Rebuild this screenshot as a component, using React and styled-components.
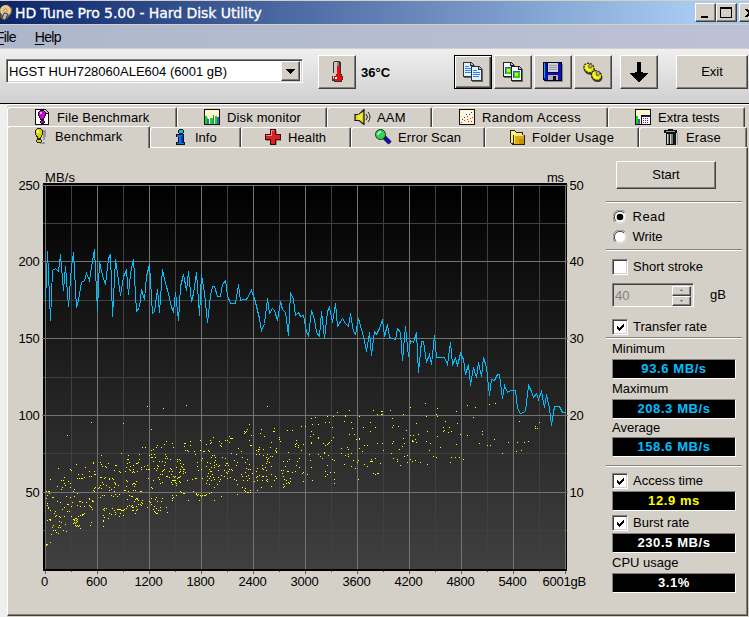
import React from "react";
import styled, { createGlobalStyle, css } from "styled-components";

// Chart samples, stored in thirds of a pixel relative to each block's origin
const rateBlocks = [
  {
    x: 0,
    y: 160,
    points:
      "136,420 142,273 151,482 157,330 166,325 175,333 181,283 190,390 196,319 206,440 214,320 220,277 229,443 236,420 245,366 253,362 259,340 268,360 276,300 283,268 286,330 292,452 299,305 307,345 316,373 324,295 331,283 337,470 346,298 353,340 362,407 371,350 379,330 385,403 392,340 400,298 409,455 418,443 425,388 433,418 439,350 448,312 457,461 464,455 472,388 479,458 487,328 496,370 505,400 514,443 520,455 526,397 535,482 542,380 550,343 559,390 565,335",
  },
  {
    x: 190,
    y: 230,
    points:
      "4,214 10,190 19,127 28,257 34,132 43,190 52,277 60,195 67,170 72,170 82,199 91,199 97,162 106,151 112,195 121,220 136,220 145,163 152,211 160,208 169,208 184,181 193,205 208,265 214,301 223,280 232,205 238,250 247,235 254,242 262,271 271,213 277,237 286,247 295,316 301,187 310,207 316,256 325,247 332,259 340,256 348,303 355,320 364,241 373,267 380,307 388,320 394,244 403,325 412,245 418,232 427,277 436,220 442,289 457,265 465,280 475,289 481,250 490,303 496,314 505,265 514,299 521,320 529,364 538,307 544,376 552,305 559,313 568,295",
  },
  {
    x: 380,
    y: 280,
    points:
      "7,118 13,170 22,133 29,172 46,178 53,145 60,156 67,242 76,139 85,230 91,181 100,187 109,157 115,278 124,184 131,184 139,247 148,223 154,253 163,166 169,232 192,232 202,253 211,187 217,253 226,236 233,256 242,220 250,237 257,283 265,253 271,317 280,262 289,292 295,247 304,289 310,233 320,262 328,346 334,298 343,300 352,283 358,283 367,355 374,317 382,337 391,331 406,331 413,385 422,401 436,394 445,317 453,335 460,352 468,341 475,358 484,335 493,382 499,344 508,385 514,436 523,380 538,380 547,397 556,397",
  },
];

const accessBlocks = [
  {
    x: 0,
    y: 400,
    points:
      "442,19 490,25 559,16 802,19 274,67 370,70 202,106 454,88 175,205 151,238 229,193 280,187 304,166 364,160 385,166 427,142 436,142 418,163 211,208 214,211 256,202 268,214 283,214 280,190 301,187 304,193 307,199 316,199 319,202 325,190 346,196 349,196 358,214 361,217 343,211 283,223 286,223 268,229 274,229 247,223 235,223 232,235 238,235 244,235 247,235 253,232 193,232 190,241 184,241 205,244 211,250 211,262 187,262 184,268 172,259 193,250 196,256 223,268 220,274 139,274 145,274 148,274 148,280 142,286 139,295 157,292 160,292 172,304 181,307 142,310 142,316 145,322 145,325 166,334 163,340 169,346 166,349 151,331 151,358 148,358 151,361 142,361 178,349 181,352 178,364 178,376 181,382 175,382 160,376 157,382 160,391 166,391 169,397 154,403 175,400 190,391 199,394 139,433 142,433 139,436 151,427 202,313 205,313 199,289 211,292 217,307 214,319 193,322 187,328 202,334 208,334 214,349 193,349 196,373 184,367 220,358 223,358 226,355 229,355 232,358 229,361 223,361 220,370 223,367 226,370 229,367 229,379 232,376 238,376 235,379 241,385 232,364 226,376 232,280 223,289 241,304 238,304 247,307 232,316 241,319 253,319 259,307 268,316 271,319 274,322 277,328 277,304 268,298 268,295 277,301 280,304 247,343 250,343 253,340 247,346 235,349 241,346 274,367 271,376 310,346 313,352 310,361 310,364 310,379 310,328 313,325 313,331 319,325 325,355 328,340 334,343 337,325 343,331 346,337 346,343 352,328 355,328 358,328 361,328 364,331 367,331 370,331 373,328 358,349 370,346 361,340 382,319 379,325 388,316 394,319 397,316 397,322 400,322 400,331 397,331 409,331 406,340 412,328 409,319 403,304 406,298 409,295 412,295 415,313 421,313 424,307 427,301 427,310 415,301 424,316 412,298 382,298 388,286 394,289 397,289 385,274 421,274 424,274 442,322 448,304 454,295 466,298 469,292 451,307 454,313 463,319 460,328 463,334 469,340 472,340 475,331 481,331 481,322 469,325 466,337 499,322 502,337 472,304 484,304 487,295 517,286 520,292 517,295 517,301 529,286 541,274 544,277 550,280 553,280 565,301 580,274 589,280 589,283 595,283 592,286 601,286 604,289 607,286 613,286 616,286 619,283 598,301 628,280 634,277 643,301 664,289 712,283 732,271 735,274 742,277 745,277 751,277 751,271 772,271 784,262 814,259 850,262 853,259 850,253 859,250 868,250 871,235 295,265 298,262 301,256 310,253 307,247 319,256 301,232 304,232 313,235 316,232 328,235 328,238 337,235 340,238 343,247 346,250 346,253 355,256 343,262 328,262 328,271 334,268 334,286 340,289 346,283 352,289 358,283 343,274 313,286 307,286 304,265 301,292 286,262 280,271 283,265 283,274 373,271 376,271 379,259 382,244 379,241 397,253 400,250 403,250 406,253 403,259 400,271 406,271 409,244 376,214 379,202 382,190 385,178 388,187 391,199 388,208 391,211 397,217 400,214 400,208 403,217 400,196 409,190 412,190 415,187 418,178 412,214 424,202 424,208 382,178 433,199 439,208 445,208 442,196 448,208 445,235 454,262 457,265 460,241 469,211 463,205 472,205 475,199 472,196 478,184 460,184 457,172 454,172 448,166 454,163 463,163 466,172 454,151 460,148 469,142 472,136 484,142 493,133 499,124 517,130 520,142 496,163 499,169 496,175 502,175 511,178 487,184 496,187 493,196 490,211 487,214 493,208 508,214 511,205 514,208 517,214 514,223 508,232 502,229 499,229 487,223 481,223 475,232 478,238 481,250 487,247 517,241 520,241 523,241 526,241 526,247 529,250 514,247 520,229 523,232 526,229 532,235 535,232 538,232 541,229 538,244 541,247 529,256 517,253 532,184 532,178 538,178 541,181 541,190 550,193 544,199 547,202 550,208 550,214 541,208 538,217 529,202 541,214 550,220 562,241 553,208 556,217 577,238 586,235 589,235 607,235 556,151 562,151 565,154 553,139 553,130 556,130 571,124 571,136 601,121 583,154 601,151 610,154 613,154 625,151 628,154 631,130 634,127 631,121 640,112 658,124 664,130 661,136 664,139 676,121 682,121 688,109 688,127 691,115 694,115 697,115 619,133 586,163 604,181 607,175 592,187 592,199 604,208 595,211 619,199 622,187 634,172 637,166 643,166 646,172 646,181 643,187 643,196 649,193 655,199 658,196 631,190 634,202 628,208 631,214 634,214 625,220 622,229 628,235 631,229 637,223 640,232 643,238 622,241 619,250 628,253 634,241 643,262 652,253 658,244 655,232 661,238 643,202 655,211 676,196 679,190 682,190 685,196 688,208 694,208 697,211 673,211 679,217 664,226 673,229 682,220 682,235 691,232 685,214 676,175 667,172 694,160 709,163 715,145 724,154 727,172 703,181 712,187 709,196 703,238 709,241 712,253 727,262 736,265 724,223 727,229 730,241 742,241 748,235 739,229 745,226 736,217 739,205 745,208 751,208 748,193 736,187 742,178 757,220 763,244 769,232 772,229 778,226 769,214 772,205 787,205 799,190 802,184 808,187 802,178 799,172 802,163 811,169 817,169 805,175 790,166 778,163 775,154 769,151 775,148 778,148 769,163 778,142 790,148 811,142 814,127 826,151 829,154 829,157 829,145 787,196 796,202 799,211 790,208 814,199 790,229 787,229 799,229 802,238 802,244 799,241 814,223 826,229 829,235 823,241 787,241 772,241 838,118 838,112 841,124 820,94 823,94 823,85 784,88 781,100 793,109 748,73 742,88 739,94 733,94 736,97 733,100 754,106 748,121 751,136 754,136 862,91 877,91 889,121 886,133 895,136 895,142 886,139 889,130 865,157 862,184 868,178 850,184 844,211 850,211 856,199 862,214 865,214 850,229 847,220 853,238 859,241 865,247 871,244 877,217 886,214 889,196 892,184 898,175 898,202",
  },
  {
    x: 300,
    y: 400,
    points:
      "4,79 16,79 10,133 4,151 7,220 10,217 10,244 22,223 37,241 34,202 31,181 28,163 34,130 34,127 31,109 34,94 40,103 37,73 34,55 46,52 55,73 55,112 55,115 82,49 100,49 112,37 148,31 136,46 136,49 178,49 133,64 154,67 157,85 148,103 163,103 76,67 88,67 97,82 100,112 94,121 88,127 85,130 82,133 76,136 70,130 55,163 61,169 67,175 73,160 73,157 85,166 97,178 103,181 82,196 76,214 82,223 76,229 91,217 103,217 103,238 103,250 124,145 124,160 142,142 145,148 136,166 145,163 145,169 154,160 160,181 133,193 154,199 166,205 172,187 175,181 175,238 169,118 178,118 178,115 178,145 187,154 193,136 202,136 190,82 211,67 226,82 211,94 232,130 247,130 250,151 226,175 214,178 211,184 214,184 217,184 193,193 202,199 241,190 220,220 226,223 232,220 235,220 220,31 232,43 244,34 247,34 244,43 247,43 271,31 277,55 280,76 277,82 295,79 310,43 331,22 376,10 412,25 379,49 409,43 412,49 469,34 502,16 526,22 568,13 586,10 319,91 349,70 331,106 340,106 355,103 310,115 313,130 307,139 298,148 280,124 277,130 274,160 280,175 292,178 292,184 301,196 322,187 322,166 313,169 331,178 337,184 346,181 361,187 382,193 337,121 337,124 340,124 346,118 349,127 379,124 391,130 388,151 400,169 409,172 382,94 412,109 421,142 436,64 472,70 448,82 430,82 433,91 430,94 445,97 454,94 481,103 502,106 469,133 454,172 466,172 478,172 451,187 490,178 520,52 547,94 547,103 538,130 562,136 571,136 583,118 607,160 625,127 652,127 673,127 685,124 664,151 649,154 658,64 706,79 706,85 712,85 718,67",
  },
];

const toPixels = (blocks) =>
  blocks.flatMap((block) =>
    block.points.split(" ").map((pair) => {
      const [x, y] = pair.split(",").map(Number);
      return [block.x + Math.floor(x / 3), block.y + Math.floor(y / 3)];
    })
  );

const ratePath = toPixels(rateBlocks)
  .map(([x, y]) => `${x + 0.5},${y + 0.5}`)
  .join(" ");

const accessPath = toPixels(accessBlocks)
  .map(([x, y]) => `M${x} ${y}h1v1h-1z`)
  .join("");

const columns = Array.from({ length: 21 }, (_, i) => 45 + i * 26);
const rows = [185, 223, 261, 300, 338, 377, 415, 453, 492, 530];

const Chart = () => (
  <ChartSvg viewBox="8 148 592 467">
    <defs>
      <linearGradient id="plot" x1="0" y1="0" x2="0" y2="1">
        <stop offset="0" stopColor="#000" />
        <stop offset="1" stopColor="#404040" />
      </linearGradient>
    </defs>
    <g shapeRendering="crispEdges">
      <rect x="43" y="183" width="524" height="388" fill="#000" />
      <rect x="45" y="185" width="521" height="384" fill="url(#plot)" />
      {columns.map((x, i) =>
        i % 2 ? <rect key={x} x={x} y="185" width="1" height="387" fill="#404040" /> : null
      )}
      {rows.map((y, i) =>
        i % 2 ? <rect key={y} x="43" y={y} width="524" height="1" fill="#404040" /> : null
      )}
      {columns.map((x, i) =>
        i % 2 ? null : (
          <g key={x}>
            <rect x={x} y="185" width="1" height="384" fill="#737373" />
            <rect x={x} y="571" width="1" height="3" fill="#606060" />
          </g>
        )
      )}
      {rows.map((y, i) =>
        i % 2 ? null : <rect key={y} x="42" y={y} width="526" height="1" fill="#737373" />
      )}
      <rect x="43" y="569" width="524" height="2" fill="#000" />
      <path d={accessPath} fill="#ffff00" />
      <polyline points={ratePath} fill="none" stroke="#00bfff" strokeWidth="1" />
    </g>
    <AxisText x="45" y="182" $spacing="0.1">MB/s</AxisText>
    <AxisText x="547" y="182">ms</AxisText>
    {[250, 200, 150, 100, 50].map((n, i) => (
      <AxisText key={n} x="39.5" y={rows[i * 2] + 5} textAnchor="end">{n}</AxisText>
    ))}
    {[50, 40, 30, 20, 10].map((n, i) => (
      <AxisText key={n} x="569.5" y={rows[i * 2] + 5}>{n}</AxisText>
    ))}
    {[0, 600, 1200, 1800, 2400, 3000, 3600, 4200, 4800, 5400].map((n, i) => (
      <AxisText key={n} x={44.5 + i * 52} y="586" textAnchor="middle">{n}</AxisText>
    ))}
    <AxisText x="542.5" y="586">6001gB</AxisText>
  </ChartSvg>
);

const Icon = ({ size = 16, children }) => (
  <svg width={size} height={size} viewBox={`0 0 ${size} ${size}`} shapeRendering="crispEdges">
    {children}
  </svg>
);

const AppIcon = () => (
  <svg width="15" height="20" viewBox="0 0 15 20">
    <path d="M0 4L7 1L13 5L12 11L5 18L0 15Z" fill="#66645f" stroke="#222" />
    <circle cx="5.5" cy="7.5" r="5" fill="#e9c58b" stroke="#fff0d0" strokeWidth=".6" />
    <circle cx="5.5" cy="7.5" r="1.5" fill="#f8f5eb" stroke="#ad7845" />
    <path d="M2 16L4 10L8 11L5 17Z" fill="#bbb" stroke="#444" />
  </svg>
);

const icons = {
  file: (
    <Icon>
      <path d="M1 0h10l4 4v12h-14z" fill="#111" />
      <path d="M2 1h9v4h3v10h-12z" fill="#fff" />
      <path d="M11 1l3 3h-3z" fill="#c8c8d0" />
      <path d="M6 1h4v1h1v1h1v4h-1v2h-1v2h-4v-2h-1v-2h-1v-4h1v-1h1z" fill="#111" />
      <path d="M6 2h4v1h1v4h-1v2h-1v1h-2v-1h-1v-2h-1v-4h1z" fill="#d800d8" />
      <path d="M7 11h3v1h1v2h-1v1h-3v-1h-1v-2h1z" fill="#111" />
      <path d="M7 12h3v2h-3z" fill="#b000c0" />
      <path d="M6 3h2v2h-2z" fill="#ffb8ff" />
    </Icon>
  ),
  bang: (
    <Icon>
      <path d="M9 2h4v7h-1v3h-2zM7 14h5v2h-5z" fill="#999" />
      <path d="M2 0h5v1h1v1h1v5h-1v2h-1v2h-4v-2h-1v-2h-1v-5h1v-1h1z" fill="#222" transform="translate(1 0)" />
      <path d="M4 1h3v1h1v5h-1v2h-1v1h-2v-2h-1v-1h-1v-5h1z" fill="#d8d800" transform="translate(.5 0)" />
      <path d="M4 2h2v3h-2z" fill="#ffffb0" />
      <path d="M4 11h4v1h1v2h-1v1h-4v-1h-1v-2h1z" fill="#222" />
      <path d="M4 12h4v2h-4z" fill="#d8d800" />
    </Icon>
  ),
  disk: (
    <Icon>
      <path d="M0 0h16v16h-16z" fill="#111" />
      <path d="M1 1h14v14h-14z" fill="#fff8c8" />
      <path d="M1 7h2v2h1v6h-3zM6 9h3v6h-3zM11 7h2v8h-2z" fill="#08e010" />
      <path d="M3 10h2v5h-2zM9 6h1v9h-1zM13 8h2v7h-2z" fill="#5050d8" />
    </Icon>
  ),
  speaker: (
    <svg width="18" height="16" viewBox="0 0 18 16">
      <path d="M1 5h4l5-5v15l-5-4h-4z" transform="translate(0 .5)" fill="#e4d500" stroke="#111" strokeWidth="1.2" />
      <path d="M5 5v6M7 4v7" stroke="#fff5a0" />
      <path d="M12 5q3 3 0 6M14 3q4 5 0 10" fill="none" stroke="#222" />
    </svg>
  ),
  random: (
    <Icon>
      <path d="M0 0h16v16h-16z" fill="#111" />
      <path d="M1 1h14v14h-14z" fill="#fff8d8" />
      <path d="M3 10h1v1h-1zM5 8h1v1h-1zM7 5h1v1h-1zM8 7h1v1h-1zM10 5h1v1h-1zM12 3h1v1h-1z" fill="#2525f5" />
      <path d="M2 13h1v1h-1zM5 11h1v1h-1zM8 10h1v1h-1zM9 12h1v1h-1zM11 9h1v1h-1zM12 12h1v1h-1zM13 8h1v1h-1z" fill="#f02020" />
    </Icon>
  ),
  extra: (
    <Icon>
      <path d="M0 0h16v16h-16z" fill="#111" />
      <path d="M1 1h14v14h-14z" fill="#fff8c8" />
      <path d="M1 7h2v8h-2z" fill="#08d810" />
      <path d="M3 10h2v5h-2z" fill="#5050d8" />
      <path d="M6 6h10v10h-10z" fill="#111" />
      <path d="M7 7h8v1h-8z" fill="#1515d5" />
      <path d="M7 8h8v7h-8z" fill="#fff" />
      <path d="M8 9h1v1h-1zM10 11h1v1h-1zM12 9h1v1h-1zM8 13h1v1h-1zM12 13h1v1h-1z" fill="#f00" />
      <path d="M10 9h1v1h-1zM8 11h1v1h-1zM12 11h1v1h-1zM10 13h1v1h-1z" fill="#22f" />
    </Icon>
  ),
  info: (
    <Icon>
      <path d="M4 0h4v1h1v3h-1v1h-4v-1h-1v-3h1z" fill="#111" />
      <path d="M4 1h4v3h-4z" fill="#00b8f8" />
      <path d="M1 5h8v8h1v3h-9v-3h2v-5h-2z" fill="#111" />
      <path d="M2 6h6v8h1v1h-7v-1h2v-6h-2z" fill="#0875f0" />
      <path d="M6 7h2v7h-2z" fill="#0038c8" />
    </Icon>
  ),
  health: (
    <Icon>
      <path d="M6 2h6v4h5v6h-5v4h-6v-4h-5v-6h5z" fill="#888" />
      <path d="M5 0h6v5h5v6h-5v5h-6v-5h-5v-6h5z" fill="#400" />
      <path d="M6 1h4v5h5v4h-5v5h-4v-5h-5v-4h5z" fill="#df2020" />
      <path d="M6 1h3v1h-2v5h-6v-1h5z" fill="#ff8888" />
    </Icon>
  ),
  search: (
    <svg width="17" height="16" viewBox="0 0 17 16">
      <path d="M9 8l6 6" stroke="#111" strokeWidth="4.4" />
      <path d="M10 9l5 5" stroke="#1010c8" strokeWidth="3" />
      <circle cx="5.5" cy="5.5" r="5" fill="#30d555" stroke="#173618" />
      <path d="M3 6q0-3 3-3" fill="none" stroke="#c8ffc8" strokeWidth="1.5" />
    </svg>
  ),
  folder: (
    <Icon>
      <path d="M1 1h5l1 2h7v3h2v10h-13l-2-2z" fill="#222" />
      <path d="M2 2h4l1 2h6v2h-9v8h-2z" fill="#ffee73" />
      <path d="M5 6h10v9h-10z" fill="#dcac0c" />
      <path d="M5 6h9v1h-8v7h-1z" fill="#ffe878" />
      <path d="M10 10h5v5h-5z" fill="#c49200" />
    </Icon>
  ),
  trash: (
    <Icon>
      <path d="M5 0h5v1h4v3h-1v12h-10v-12h-2v-3h4z" fill="#111" />
      <path d="M3 2h9v1h-9z" fill="#999" />
      <path d="M4 5h1v10h-1zM7 5h1v10h-1z" fill="#d2d2d2" />
      <path d="M5 5h1v10h-1zM8 5h2v10h-2z" fill="#777" />
      <path d="M14 4h1v12h-1z" fill="#999" />
    </Icon>
  ),
};

const ThermometerIcon = () => (
  <svg width="14" height="22" viewBox="0 0 14 22" shapeRendering="crispEdges">
    <path d="M4 0h6v1h1v12h1v2h1v4h-1v2h-8v-1h-2v-5h2v-3h-1v-11h1z" fill="#333" />
    <path d="M4 1h3v12h-1v2h-2v3h-1v-3h1z" fill="#c8c8c8" />
    <path d="M7 1h2v4h-2z" fill="#888" />
    <path d="M7 5h3v9h1v1h1v4h-1v1h-6v-1h-1v-3h2v-2h1z" fill="#f00a0a" />
    <path d="M5 16h2v2h-2z" fill="#fff" />
  </svg>
);

const CopyIcon = ({ picture }) => (
  <Icon size={20}>
    {[[0, 0], [8, 4]].map(([x, y]) => (
      <g key={x} transform={`translate(${x} ${y})`}>
        <path d="M1 1h8l3 3v12h-11z" fill="#666" />
        <path d="M0 0h8l3 3v12h-11z" fill={picture ? "#202020" : "#30343c"} />
        <path d="M1 1h6v3h3v10h-9z" fill={picture ? "#f8f8f8" : "#e2f0ff"} />
        <path d="M8 1l2 2h-2z" fill="#bbb" />
        {picture ? (
          <>
            <path d="M2 5h7v7h-7z" fill="#29d817" />
            <path d="M2 5h7v1h-6v6h-1z" fill="#2855e8" />
            <path d="M4 7h3v3h-3z" fill="#e8f020" />
          </>
        ) : (
          <path d="M2 4h4v1h-4zM2 6h7v1h-7zM2 8h7v1h-7zM2 10h6v1h-6z" fill="#2a86ea" />
        )}
      </g>
    ))}
  </Icon>
);

const SaveIcon = () => (
  <Icon size={20}>
    <path d="M2 2h18v18h-18z" fill="#8a8a8a" />
    <path d="M0 0h19v19h-18v-1h-1z" fill="#050520" />
    <path d="M1 1h3v10h11v-10h3v17h-16v-1h-1z" fill="#1010b8" />
    <path d="M1 1h1v15h-1z" fill="#10a8e8" />
    <path d="M5 1h10v9h-10z" fill="#ccd1d8" />
    <path d="M6 3h8v1h-8zM6 5h8v1h-8zM6 7h8v1h-8z" fill="#999" />
    <path d="M5 13h10v5h-10z" fill="#ababab" />
    <path d="M10 14h3v4h-3z" fill="#111" />
  </Icon>
);

const OptionsIcon = () => (
  <svg width="20" height="20" viewBox="0 0 20 20">
    {[[6, 6], [13.5, 13.5]].map(([x, y]) => (
      <g key={x} transform={`translate(${x} ${y}) rotate(35)`}>
        <ellipse cx="1" cy="1" rx="6" ry="5" fill="#444" />
        <ellipse rx="5.3" ry="4.5" fill="#e6e000" stroke="#222" strokeWidth="1.2" strokeDasharray="2 1" />
        <path d="M-4-1q3 5 7 2" fill="none" stroke="#ffff3c" strokeWidth="1.5" />
        <ellipse cx="0" cy="-2.5" rx="1.5" ry="2" fill="#c7c5b7" stroke="#555" />
      </g>
    ))}
  </svg>
);

const ArrowIcon = () => (
  <Icon size={20}>
    <path d="M9 0h4v10h2v1h5v1h-1v1h-1v1h-1v1h-1v1h-1v1h-1v1h-1v1h-1v1h-2v-1h-1v-1h-1v-1h-1v-1h-1v-1h-1v-1h-1v-1h-1v-1h-1v-1h5v-1h2z" transform="translate(-1 0)" fill="#000" />
  </Icon>
);

const backTabs = [
  { label: "File Benchmark", icon: "file", width: 170, pad: 25, gap: 7, spacing: 0.15 },
  { label: "Disk monitor", icon: "disk", width: 150, pad: 25, gap: 7, spacing: 0.15 },
  { label: "AAM", icon: "speaker", width: 105, pad: 25, gap: 5, spacing: 0.2 },
  { label: "Random Access", icon: "random", width: 176, pad: 25, gap: 7, spacing: 0.4 },
  { label: "Extra tests", icon: "extra", width: 137, pad: 25, gap: 7, spacing: 0 },
];

const frontTabs = [
  { label: "Benchmark", icon: "bang", width: 143, pad: 24, gap: 6, spacing: 0.2, active: true },
  { label: "Info", icon: "info", width: 91, pad: 23, gap: 4, spacing: 0 },
  { label: "Health", icon: "health", width: 110, pad: 22, gap: 7, spacing: 0.1 },
  { label: "Error Scan", icon: "search", width: 134, pad: 22, gap: 6, spacing: 0.1 },
  { label: "Folder Usage", icon: "folder", width: 154, pad: 22, gap: 7, spacing: 0.35 },
  { label: "Erase", icon: "trash", width: 108, pad: 22, gap: 7, spacing: 0.2 },
];

const Tabs = ({ tabs }) => (
  <TabRow>
    {tabs.map((tab) => (
      <Tab key={tab.label} $width={tab.width} $pad={tab.pad} $gap={tab.gap} $spacing={tab.spacing} $active={tab.active}>
        {icons[tab.icon]}
        <TabLabel>{tab.label}</TabLabel>
      </Tab>
    ))}
  </TabRow>
);

const Check = ({ checked, top, children }) => (
  <Option $top={top} $height={16}>
    <CheckBox>
      {checked && (
        <svg width="9" height="9" viewBox="0 0 9 9">
          <path d="M1 3v3l2 2l5-5v-3l-5 5z" fill="#000" shapeRendering="crispEdges" />
        </svg>
      )}
    </CheckBox>
    {children}
  </Option>
);

const App = () => {
  return (
    <Window>
      <GlobalStyle />
      <TitleBar>
        <AppIcon />
        <Title>HD Tune Pro 5.00 - Hard Disk Utility</Title>
        <CaptionButtons>
          <CaptionButton>
            <Icon size={17}><path d="M4 12h7v2h-7z" /></Icon>
          </CaptionButton>
          <CaptionButton>
            <Icon size={17}><path d="M2 3h12v11h-12zM3 5v8h10v-8z" fillRule="evenodd" /></Icon>
          </CaptionButton>
          <CaptionButton $last>
            <Icon size={17}><path d="M4 5h2l2 2l2-2h2l-3 4l3 4h-2l-2-2l-2 2h-2l3-4z" /></Icon>
          </CaptionButton>
        </CaptionButtons>
      </TitleBar>
      <MenuBar>
        <MenuItem><u>F</u>ile</MenuItem>
        <MenuItem><u>H</u>elp</MenuItem>
      </MenuBar>
      <Toolbar>
        <DriveSelect>
          <span>HGST HUH728060ALE604 (6001 gB)</span>
          <DropButton>
            <Icon size={9}><path d="M0 2h9v1h-1v1h-1v1h-1v1h-1v1h-1v-1h-1v-1h-1v-1h-1v-1h-1z" /></Icon>
          </DropButton>
        </DriveSelect>
        <ToolButton $left={15}><ThermometerIcon /></ToolButton>
        <Temperature>36°C</Temperature>
        <ToolButton $focus><CopyIcon /></ToolButton>
        <ToolButton $left={2}><CopyIcon picture /></ToolButton>
        <ToolButton $left={2}><SaveIcon /></ToolButton>
        <ToolButton $left={2}><OptionsIcon /></ToolButton>
        <ToolButton $left={8}><ArrowIcon /></ToolButton>
        <ToolButton $left={18} $width={72}>Exit</ToolButton>
      </Toolbar>
      <Body>
        <Tabs tabs={backTabs} />
        <Tabs tabs={frontTabs} />
        <Panel>
          <Chart />
          <Sidebar>
            <StartButton>Start</StartButton>
            <Separator $top={12} />
            <Option $top={7} $height={14}>
              <Radio>
                <circle cx="7" cy="7" r="3.3" fill="#000" />
              </Radio>
              <Spaced>Read</Spaced>
            </Option>
            <Option $top={6} $height={14}>
              <Radio />
              Write
            </Option>
            <Separator $top={5} />
            <Check top={8}>Short stroke</Check>
            <StrokeSize>
              <SpinBox>
                <span>40</span>
                <SpinButtons>
                  <SpinButton>
                    <Icon size={5}><path d="M2 1h1v1h1v1h-3v-1h1z" fill="#808080" /></Icon>
                  </SpinButton>
                  <SpinButton>
                    <Icon size={5}><path d="M1 2h3v1h-1v1h-1v-1h-1z" fill="#808080" /></Icon>
                  </SpinButton>
                </SpinButtons>
              </SpinBox>
              gB
            </StrokeSize>
            <Check checked top={12}>Transfer rate</Check>
            <Separator $top={2} />
            <Caption $height={20}>Minimum</Caption>
            <Value $color="#00bfff">93.6 MB/s</Value>
            <Caption $height={20}>Maximum</Caption>
            <Value $color="#00bfff">208.3 MB/s</Value>
            <Caption $height={18}>Average</Caption>
            <Value $color="#00bfff">158.6 MB/s</Value>
            <Separator $top={8} />
            <Check checked top={6}>Access time</Check>
            <Value $color="#ffff00" $top={2}>12.9 ms</Value>
            <Check checked top={4}>Burst rate</Check>
            <Value $color="#fff" $top={2}>230.5 MB/s</Value>
            <Caption $height={20}>CPU usage</Caption>
            <Value $color="#fff">3.1%</Value>
          </Sidebar>
        </Panel>
      </Body>
    </Window>
  );
};

export default App;

// Styled Components
const GlobalStyle = createGlobalStyle`
  * {
    box-sizing: border-box;
  }

  body {
    margin: 0;
    overflow: hidden;
  }

  svg {
    display: block;
    flex-shrink: 0;
  }
`;

const raised = css`
  background: #d4d0c8;
  border: 1px solid;
  border-color: #fff #404040 #404040 #fff;
  box-shadow: inset -1px -1px 0 #808080;
`;

const sunken = css`
  border: 1px solid;
  border-color: #808080 #fff #fff #808080;
  box-shadow: inset 1px 1px 0 #404040, inset -1px -1px 0 #d4d0c8;
`;

const Window = styled.div`
  width: 749px;
  height: 617px;
  overflow: hidden;
  display: flex;
  flex-direction: column;
  background: #efefef;
  color: #000;
  font: 13px/16px "Liberation Sans", Arial, sans-serif;
  white-space: nowrap;
`;

const TitleBar = styled.div`
  height: 25px;
  display: flex;
  align-items: center;
  border-top: 1px solid #d4d0c8;
  border-bottom: 1px solid #d4d0c8;
  background: linear-gradient(90deg, #0a246a, #a6caf0 92%);
`;

const Title = styled.div`
  flex: 1;
  color: #fff;
  font: 14px "DejaVu Sans", sans-serif;
  letter-spacing: -0.05px;
  -webkit-text-stroke: 0.3px #fff;
`;

const CaptionButtons = styled.div`
  display: flex;
  width: 54px;
`;

const CaptionButton = styled.div`
  ${raised}
  width: 21px;
  height: 19px;
  flex-shrink: 0;
  padding-left: 1px;
  margin-left: ${(p) => (p.$last ? "2px" : "0")};
`;

const MenuBar = styled.div`
  height: 24px;
  display: flex;
  gap: 19px;
  align-items: center;
  border-bottom: 1px solid #d4d0c8;
  background: linear-gradient(90deg, #adb7cb, #bdc1d5);
`;

const MenuItem = styled.div`
  font-size: 14px;
  letter-spacing: -0.7px;
  margin-left: -4px;

  & + & {
    margin-left: 0;
  }

  u {
    text-underline-offset: 2px;
  }
`;

const Toolbar = styled.div`
  height: 55px;
  display: flex;
  align-items: flex-start;
  padding: 6px 0 0 6px;
  border-bottom: 1px solid #000;
  background: linear-gradient(#efefef, #d0d0d0);
`;

const DriveSelect = styled.div`
  ${sunken}
  width: 297px;
  height: 24px;
  margin-top: 4px;
  padding: 2px;
  background: #fff;
  display: flex;
  align-items: center;
  justify-content: space-between;

  span {
    padding-top: 1px;
  }
`;

const DropButton = styled.div`
  ${raised}
  width: 19px;
  height: 20px;
  display: flex;
  align-items: center;
  justify-content: center;
`;

const ToolButton = styled.div`
  ${raised}
  width: ${(p) => p.$width || 38}px;
  height: 34px;
  flex-shrink: 0;
  margin-left: ${(p) => p.$left || 0}px;
  padding-bottom: 1px;
  display: flex;
  align-items: center;
  justify-content: center;
  ${(p) =>
    p.$focus &&
    css`
      border-color: #000;
      box-shadow: inset 1px 1px 0 #fff, inset -1px -1px 0 #404040, inset -2px -2px 0 #808080;
    `}
`;

const Temperature = styled.div`
  width: 98px;
  padding: 10px 0 0 5px;
  font-weight: bold;
`;

const Body = styled.div`
  flex: 1;
  margin-left: 7px;
  padding-top: 2px;
  border-top: 1px solid #fff;
  background: #d4d0c8;
`;

const TabRow = styled.div`
  height: 20px;
  display: flex;
`;

const Tab = styled.div`
  width: ${(p) => p.$width}px;
  height: ${(p) => (p.$active ? 22 : 20)}px;
  margin-top: ${(p) => (p.$active ? -1 : 0)}px;
  padding: 0 0 ${(p) => (p.$active ? 4 : 1)}px ${(p) => p.$pad + 1}px;
  display: flex;
  align-items: center;
  gap: ${(p) => p.$gap}px;
  letter-spacing: ${(p) => p.$spacing}px;
  background: #d4d0c8;
  border: solid;
  border-width: 1px 1px 0;
  border-color: #fff #404040 #fff #fff;
  border-radius: 3px 2px 0 0;
  box-shadow: inset -1px 0 0 #808080;
  z-index: ${(p) => (p.$active ? 1 : 0)};
`;

const TabLabel = styled.span`
  padding-top: 2px;
`;

const Panel = styled.div`
  height: 469px;
  width: 741px;
  display: flex;
  background: #d4d0c8;
  border: 1px solid;
  border-color: #fff #404040 #404040 #fff;
  box-shadow: inset -1px -1px 0 #808080;
`;

const ChartSvg = styled.svg`
  width: 592px;
  height: 467px;
`;

const AxisText = styled.text`
  font-size: 13px;
  letter-spacing: ${(p) => p.$spacing || -0.25}px;
`;

const Sidebar = styled.div`
  width: 142px;
  padding: 13px 0 0 6px;
  display: flex;
  flex-direction: column;
`;

const StartButton = styled.div`
  ${raised}
  width: 100px;
  height: 28px;
  flex-shrink: 0;
  margin-left: 10px;
  line-height: 25px;
  text-align: center;
`;

const Separator = styled.div`
  width: 136px;
  height: 2px;
  flex-shrink: 0;
  margin-top: ${(p) => p.$top}px;
  background: #fff;
  border-top: 1px solid #808080;
`;

const Option = styled.div`
  height: ${(p) => p.$height}px;
  margin: ${(p) => p.$top}px 0 0 6px;
  display: flex;
  align-items: center;
  gap: ${(p) => (p.$height === 16 ? 5 : 5.5)}px;
  flex-shrink: 0;
`;

const Spaced = styled.span`
  letter-spacing: 0.5px;
`;

const RadioSvg = styled.svg`
  width: 14px;
  height: 14px;
  margin-left: 1px;
`;

const Radio = ({ children }) => (
  <RadioSvg viewBox="0 0 14 14">
    <circle cx="7" cy="7" r="6.5" fill="#fff" />
    <path d="M2 12A6.5 6.5 0 0 1 12 2" fill="none" stroke="#808080" />
    <path d="M3 11A5.5 5.5 0 0 1 11 3" fill="none" stroke="#404040" />
    <path d="M3 11A5.5 5.5 0 0 0 11 3" fill="none" stroke="#d4d0c8" />
    {children}
  </RadioSvg>
);

const CheckBox = styled.div`
  ${sunken}
  width: 16px;
  height: 16px;
  background: #fff;
  display: flex;
  align-items: center;
  justify-content: center;
`;

const StrokeSize = styled.div`
  height: 24px;
  margin: 8px 0 0 6px;
  display: flex;
  align-items: center;
  gap: 16px;
  flex-shrink: 0;
`;

const SpinBox = styled.div`
  ${sunken}
  width: 82px;
  height: 24px;
  padding: 2px 2px 1px;
  display: flex;
  align-items: center;
  justify-content: space-between;
  color: #808080;
`;

const SpinButtons = styled.div`
  width: 19px;
`;

const SpinButton = styled.div`
  ${raised}
  height: 10px;
  display: flex;
  align-items: center;
  justify-content: center;
`;

const Caption = styled.div`
  height: ${(p) => p.$height}px;
  line-height: ${(p) => p.$height}px;
  margin-left: 6px;
  flex-shrink: 0;
`;

const Value = styled.div`
  width: 124px;
  height: 20px;
  flex-shrink: 0;
  margin: ${(p) => p.$top || 0}px 0 0 6px;
  border: 1px solid;
  border-color: #808080 #fff #fff #808080;
  background: #000;
  color: ${(p) => p.$color};
  font-weight: bold;
  line-height: 18px;
  letter-spacing: 0.6px;
  text-align: center;
`;
